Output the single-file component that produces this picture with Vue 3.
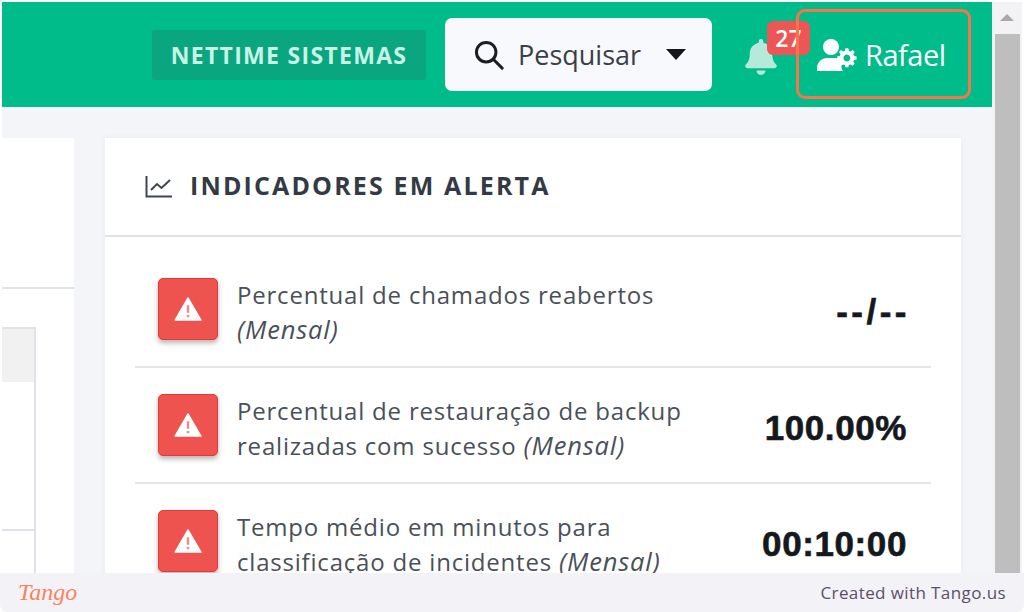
<template>
  <div class="screen">
    <div class="viewport">
      <div class="page">
        <header class="topbar">
          <div class="brand">NETTIME SISTEMAS</div>
          <button class="search">
            <svg class="search-icon" viewBox="0 0 32 32" fill="none" stroke="#1d1d24" stroke-width="3.2">
              <circle cx="13" cy="13" r="10.4" />
              <path d="M20.6 20.6 30 30" stroke-linecap="round" />
            </svg>
            <span>Pesquisar</span>
            <i class="caret"></i>
          </button>
          <div class="bell">
            <svg viewBox="0 0 448 512" fill="#b5eadb">
              <path d="M224 512c35 0 64-29 64-64H160c0 35 29 64 64 64zm216-150c-19-21-56-52-56-154 0-78-54-140-128-155V32a32 32 0 1 0-64 0v21C118 68 64 130 64 208c0 102-37 133-56 154-6 6-8 13-8 22 0 16 13 32 32 32h384c19 0 32-16 32-32 0-9-2-16-8-22z" />
            </svg>
            <span class="badge">27</span>
          </div>
          <div class="user">
            <svg class="user-icon" viewBox="0 0 40 32" fill="#fff">
              <circle cx="14" cy="8" r="8" />
              <path d="M0 32v-3c0-6 5-10 10-10h8c3 0 5 1 7 2-1 3-1 9 1 11z" />
              <path fill-rule="evenodd" d="M30 13l3 0 .6 2.6 1.6.7 2.3-1.4 2 2-1.4 2.300.7 1.600 2.600.6v3l-2.600.6-.7 1.600 1.400 2.300-2 2-2.300-1.400-1.600.7-.6 2.100h-3l-.6-2.100-1.600-.7-2.300 1.400-2-2 1.400-2.300-.7-1.600-2.600-.6v-3l2.600-.6.7-1.600-1.400-2.300 2-2 2.300 1.400 1.600-.7zM31.500 19.500a3.500 3.500 0 1 0 .01 0z" transform="translate(-1 -3.500) scale(.98)" />
            </svg>
            <span>Rafael</span>
          </div>
        </header>

        <div class="content">
          <section class="side-card">
            <div class="side-head"></div>
            <div class="side-body">
              <div class="mini-table">
                <div class="mini-head"></div>
                <div class="mini-row"></div>
                <div class="mini-row"></div>
              </div>
            </div>
          </section>

          <section class="alert-card">
            <div class="alert-head">
              <svg class="chart-icon" viewBox="0 0 28 24" fill="none" stroke="#3f4650" stroke-width="2">
                <path d="M1.500 1v20.500H27" />
                <path d="M6 15l6-6 4.500 4L25 5" />
              </svg>
              <h2>INDICADORES EM ALERTA</h2>
            </div>
            <div class="alert-list">
              <div v-for="item in items" :key="item.value" class="alert-row">
                <div class="alert-icon">
                  <svg viewBox="0 0 30 26">
                    <path d="M15 1 29 25H1z" fill="#fff" stroke="#fff" stroke-width="1.500" stroke-linejoin="round" />
                    <path d="M15 9v8M15 19.500v2.500" stroke="#f08a8a" stroke-width="2.600" />
                  </svg>
                </div>
                <p class="alert-text">{{ item.text }}<br />{{ item.second }} <em>(Mensal)</em></p>
                <strong class="alert-value" :class="{ empty: item.value === '--/--' }">{{ item.value }}</strong>
              </div>
            </div>
          </section>
        </div>
      </div>

      <div class="scrollbar">
        <i class="scroll-up"></i>
        <div class="scroll-thumb"></div>
      </div>
    </div>

    <footer class="footer">
      <span class="tango">Tango</span>
      <span class="credit">Created with Tango.us</span>
    </footer>

    <div class="highlight"></div>
  </div>
</template>

<script setup>
const items = [
  { text: 'Percentual de chamados reabertos', second: '', value: '--/--' },
  { text: 'Percentual de restauração de backup', second: 'realizadas com sucesso', value: '100.00%' },
  { text: 'Tempo médio em minutos para', second: 'classificação de incidentes', value: '00:10:00' },
]
</script>

<style>
html, body {
  margin: 0;
  background: #fff;
  overflow: hidden;
}
</style>

<style scoped>
.screen {
  position: relative;
  display: flex;
  flex-direction: column;
  width: 1024px;
  height: 612px;
  overflow: hidden;
  background: #f3f2f7;
  border-radius: 8px;
  font-family: "Open Sans", "Noto Sans", sans-serif;
}

.viewport {
  display: flex;
  height: 573px;
  padding: 2px 2px 0 2px;
  box-sizing: border-box;
  background: #fff;
}

.page {
  width: 990px;
  height: 571px;
  overflow: hidden;
  background: #f4f5f8;
}

/* top bar */
.topbar {
  display: flex;
  align-items: center;
  height: 105px;
  padding-left: 150px;
  box-sizing: border-box;
  background: #00bb8a;
}

.brand {
  width: 274px;
  height: 50px;
  line-height: 50px;
  text-align: center;
  font-size: 23px;
  font-weight: 700;
  letter-spacing: 1.3px;
  color: #c9f3e6;
  background: #0aa67f;
  border-radius: 3px;
}

.search {
  display: flex;
  align-items: center;
  width: 267px;
  height: 73px;
  margin-left: 19px;
  padding: 0 0 0 29px;
  box-sizing: border-box;
  border: none;
  border-radius: 7px;
  background: #f8f9fc;
  font-family: inherit;
  font-size: 27px;
  color: #3a3f47;
}

.search-icon {
  width: 30px;
  height: 30px;
  margin-right: 14px;
}

.caret {
  margin-left: 25px;
  border-left: 10px solid transparent;
  border-right: 10px solid transparent;
  border-top: 11px solid #15151b;
}

.bell {
  position: relative;
  width: 32px;
  height: 36px;
  margin: 5px 0 0 33px;
}

.bell svg {
  display: block;
  width: 32px;
  height: 36px;
}

.badge {
  position: absolute;
  left: 22px;
  top: -18px;
  width: 43px;
  height: 34px;
  line-height: 34px;
  text-align: center;
  font-size: 23px;
  font-weight: 600;
  color: #fff;
  background: #ee5555;
  border-radius: 6px;
}

.user {
  display: flex;
  align-items: center;
  margin-left: 40px;
  font-size: 29px;
  letter-spacing: -0.5px;
  color: #fff;
}

.user-icon {
  width: 40px;
  height: 32px;
  margin-right: 8px;
}

/* cards */
.content {
  display: flex;
  gap: 31px;
  margin: 31px 0 0 0;
}

.side-card {
  width: 72px;
  height: 440px;
  flex: none;
  background: #fff;
}

.side-head {
  height: 149px;
  border-bottom: 2px solid #dfe3e8;
}

.side-body {
  padding-top: 38px;
}

.mini-table {
  width: 32px;
  border-top: 2px solid #dfe3e8;
  border-right: 2px solid #dfe3e8;
}

.mini-head {
  height: 53px;
  background: #f1f1f1;
}

.mini-row {
  height: 147px;
  border-bottom: 2px solid #dfe3e8;
}

.alert-card {
  width: 856px;
  height: 440px;
  flex: none;
  background: #fff;
  box-shadow: 0 0 5px rgba(60, 70, 90, 0.07);
}

.alert-head {
  display: flex;
  align-items: center;
  height: 97px;
  padding-left: 40px;
  border-bottom: 2px solid #dfe3e8;
}

.chart-icon {
  width: 28px;
  height: 24px;
  margin-right: 17px;
}

.alert-head h2 {
  margin: 0 0 3px;
  font-size: 25px;
  font-weight: 700;
  letter-spacing: 2.15px;
  color: #343a44;
}

.alert-list {
  padding: 15px 30px 0;
}

.alert-row {
  display: flex;
  align-items: center;
  height: 114px;
  padding: 0 24px 0 23px;
  border-bottom: 2px solid #e4e6ea;
}

.alert-row:last-child {
  border-bottom: none;
}

.alert-icon {
  display: flex;
  flex: none;
  align-items: center;
  justify-content: center;
  width: 60px;
  height: 62px;
  box-sizing: border-box;
  background: #ef5350;
  border: 1px solid #e53935;
  border-radius: 5px;
  box-shadow: 0 3px 5px rgba(60, 40, 40, 0.35);
}

.alert-icon svg {
  width: 28px;
  height: 24px;
}

.alert-text {
  flex: 1;
  margin: 6px 0 0 19px;
  font-size: 24px;
  line-height: 34px;
  letter-spacing: 0.8px;
  color: #4a5059;
}

.alert-text em {
  font-size: 25.5px;
}

.alert-value {
  margin-top: 6px;
  font-family: "Liberation Sans", Arial, sans-serif;
  font-size: 35px;
  font-weight: 700;
  letter-spacing: 0.6px;
  color: #15181d;
  -webkit-text-stroke: 0.6px #15181d;
}

.alert-value.empty {
  letter-spacing: 3.5px;
  margin-right: -3px;
}

/* scrollbar */
.scrollbar {
  display: flex;
  flex-direction: column;
  align-items: center;
  width: 30px;
  background: #f3f3f5;
}

.scroll-up {
  margin-top: 12px;
  border-left: 7px solid transparent;
  border-right: 7px solid transparent;
  border-bottom: 7px solid #a9a9a9;
}

.scroll-thumb {
  width: 25px;
  flex: 1;
  margin-top: 13px;
  background: #bebebe;
}

/* footer */
.footer {
  display: flex;
  flex: 1;
  align-items: center;
  justify-content: space-between;
  padding: 0 18px;
  background: #f3f2f7;
}

.tango {
  font-family: "Liberation Serif", serif;
  font-style: italic;
  font-size: 24px;
  color: #f7835f;
}

.credit {
  font-family: "Open Sans", sans-serif;
  font-size: 17px;
  letter-spacing: 0.4px;
  color: #5a5068;
}

.highlight {
  position: absolute;
  left: 796px;
  top: 9px;
  width: 175px;
  height: 90px;
  box-sizing: border-box;
  border: 3px solid #f9744a;
  border-radius: 9px;
}
</style>
